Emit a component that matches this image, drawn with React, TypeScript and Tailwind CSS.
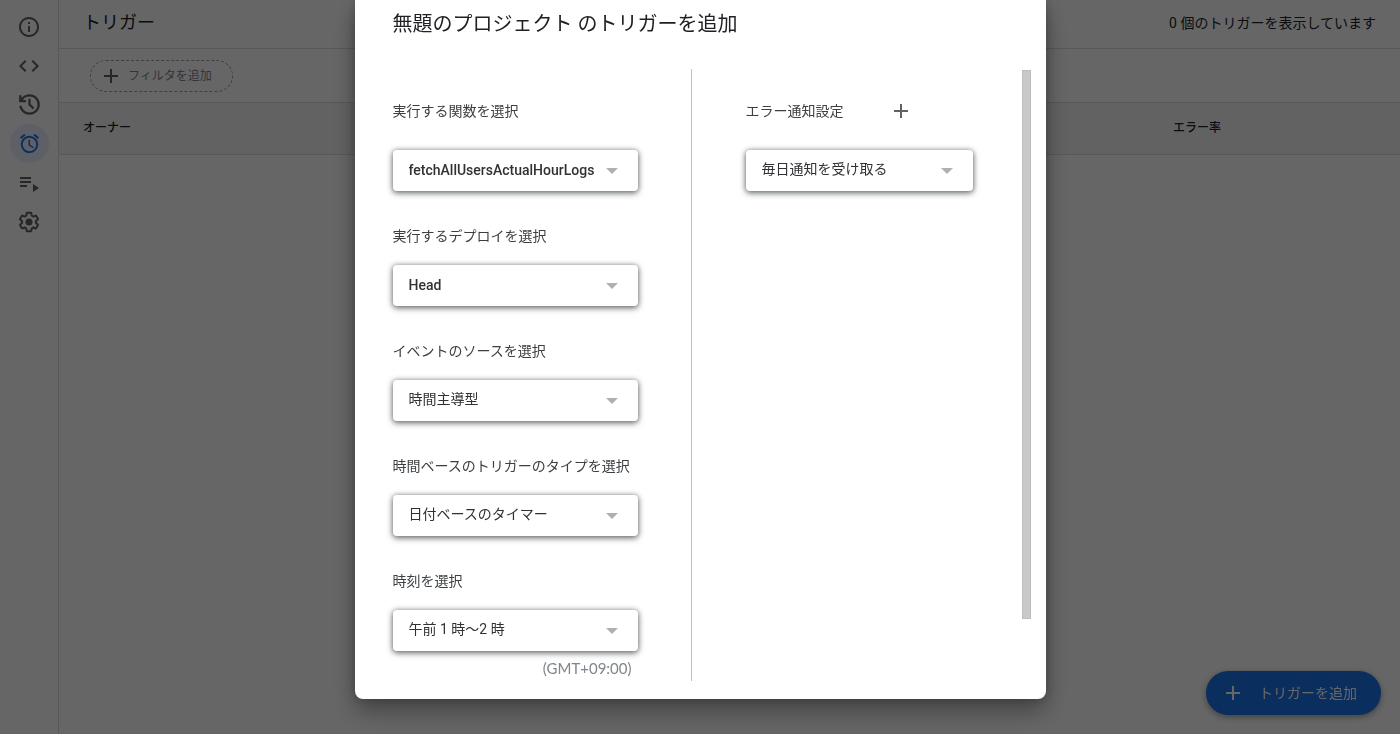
import { useState } from 'react';
import { MdAdd, MdAlarm, MdCode, MdInfoOutline } from 'react-icons/md';

interface Field {
  id: string;
  label: string;
  value: string;
}

const fields: Field[] = [
  { id: 'function', label: '実行する関数を選択', value: 'fetchAllUsersActualHourLogs' },
  { id: 'deployment', label: '実行するデプロイを選択', value: 'Head' },
  { id: 'source', label: 'イベントのソースを選択', value: '時間主導型' },
  { id: 'type', label: '時間ベースのトリガーのタイプを選択', value: '日付ベースのタイマー' },
  { id: 'time', label: '時刻を選択', value: '午前 1 時～2 時' },
];

function HistoryIcon() {
  return (
    <svg viewBox="2 2 20 20" className="size-[23px]" fill="currentColor">
      <path d="M12 21q-3.45 0-6.013-2.288T3.05 13H5.1q.35 2.6 2.312 4.3T12 19q2.925 0 4.963-2.037T19 12t-2.037-4.962T12 5q-1.725 0-3.225.8T6.25 8H9v2H3V4h2v2.35q1.275-1.6 3.113-2.475T12 3q1.875 0 3.513.713t2.85 1.924 1.925 2.85T21 12t-.712 3.513-1.925 2.85-2.85 1.925T12 21m2.8-4.8L11 12.4V7h2v4.6l3.2 3.2z" />
    </svg>
  );
}

function ExecutionsIcon() {
  return (
    <svg viewBox="0 0 24 24" className="size-6" fill="currentColor">
      <path d="M3 6h11v2H3zM3 10h11v2H3zM3 14h7v2H3zM16 13v8l6-4z" />
    </svg>
  );
}

function SettingsIcon() {
  return (
    <svg viewBox="0 0 24 24" className="size-6" fill="currentColor">
      <path d="M13.85 22.25h-3.7c-.74 0-1.36-.54-1.45-1.27l-.27-1.89c-.27-.14-.53-.29-.79-.46l-1.8.72c-.7.26-1.47-.03-1.81-.65L2.2 15.53c-.35-.66-.2-1.44.36-1.88l1.53-1.19c-.01-.15-.02-.3-.02-.46 0-.15.01-.31.02-.46l-1.52-1.19c-.59-.45-.74-1.26-.37-1.88l1.85-3.19c.34-.62 1.11-.9 1.79-.63l1.81.73c.26-.17.52-.32.78-.46l.27-1.91c.09-.7.71-1.25 1.44-1.25h3.7c.74 0 1.36.54 1.45 1.27l.27 1.89c.27.14.53.29.79.46l1.8-.72c.71-.26 1.48.03 1.82.65l1.84 3.18c.36.66.2 1.44-.36 1.88l-1.52 1.19c.01.15.02.3.02.46s-.01.31-.02.46l1.52 1.19c.56.45.72 1.23.37 1.86l-1.86 3.22c-.34.62-1.11.9-1.8.63l-1.8-.72c-.26.17-.52.32-.78.46l-.27 1.91c-.1.68-.72 1.22-1.46 1.22zm-3.23-2h2.76l.37-2.55.53-.22c.44-.18.88-.44 1.34-.78l.45-.34 2.38.96 1.38-2.4-2.03-1.58.07-.56c.03-.26.06-.51.06-.78s-.03-.53-.06-.78l-.07-.56 2.03-1.58-1.39-2.4-2.39.96-.45-.35c-.42-.32-.87-.58-1.33-.77l-.52-.22-.37-2.55h-2.76l-.37 2.55-.53.21c-.44.19-.88.44-1.34.79l-.45.33-2.38-.95-1.39 2.39 2.03 1.58-.07.56a7 7 0 0 0-.06.79c0 .26.02.53.06.78l.07.56-2.03 1.58 1.38 2.4 2.39-.96.45.35c.43.33.86.58 1.33.77l.53.22z" />
      <circle cx="12" cy="12" r="3.5" />
    </svg>
  );
}

const navItems = [
  { label: '概要', icon: <MdInfoOutline size={24} /> },
  { label: 'エディタ', icon: <MdCode size={24} /> },
  { label: 'プロジェクトの履歴', icon: <HistoryIcon /> },
  { label: 'トリガー', icon: <MdAlarm size={23} />, active: true },
  { label: '実行数', icon: <ExecutionsIcon /> },
  { label: 'プロジェクトの設定', icon: <SettingsIcon /> },
];

function Dropdown({ id, value }: { id: string; value: string }) {
  // ASCII names are set in medium, Japanese values in regular
  const isAscii = /^[\x20-\x7e]+$/.test(value);

  return (
    <div className="relative">
      <select
        id={id}
        className={`block h-[41px] w-full appearance-none rounded bg-white pl-4 pr-5 text-sm text-[#303134] shadow-[0_2px_6px_rgba(60,64,67,0.7),0_0_5px_rgba(60,64,67,0.4)] outline-none ${isAscii ? 'font-medium pb-[2px]' : 'font-normal pb-1'}`}
      >
        <option>{value}</option>
      </select>
      <svg viewBox="0 0 12 6" className="pointer-events-none absolute right-5 top-[18px] h-[6px] w-3" fill="#b0b0b0">
        <path d="M0 0h12L6 6z" />
      </svg>
    </div>
  );
}

export default function App() {
  const [open] = useState(true);

  return (
    <div lang="ja" className="flex min-h-screen bg-white font-['Roboto','Noto_Sans_CJK_JP',sans-serif] text-[#202124]">
      <nav className="w-[59px] shrink-0 border-r border-[#dadce0] pt-[7px]">
        <ul className="flex flex-col items-center">
          {navItems.map(item => (
            <li key={item.label}>
              <a
                href="#"
                aria-label={item.label}
                className={`flex size-[39px] items-center justify-center rounded-full ${item.active ? 'bg-[#e8f0fe] text-[#1a73e8]' : 'text-[#5f6368]'}`}
              >
                {item.icon}
              </a>
            </li>
          ))}
        </ul>
      </nav>

      <main className="flex-1">
        <header className="flex h-[49px] items-center justify-between border-b border-[#dadce0] pl-6 pr-6 pb-[2px]">
          <h1 className="text-lg">トリガー</h1>
          <p className="text-sm">0 個のトリガーを表示しています</p>
        </header>
        <div className="flex h-[54px] items-center border-b border-[#dadce0] pl-[31px]">
          <button className="flex h-8 items-center gap-[5px] rounded-full border border-dashed border-[#9aa0a6] pl-2 pr-5 text-xs text-[#80868b]">
            <MdAdd size={24} className="text-[#5f6368]" />
            フィルタを追加
          </button>
        </div>
        <table className="w-full table-fixed text-left text-xs">
          <thead>
            <tr className="h-[51px] border-b border-[#dadce0] bg-[#f5f5f5]">
              <th className="pl-6 font-medium">オーナー</th>
              <th className="w-[227px] font-medium">エラー率</th>
            </tr>
          </thead>
        </table>
      </main>

      <button className="fixed bottom-[19px] right-[19px] flex h-11 items-center gap-[14px] rounded-full bg-[#1a73e8] pl-[15px] pr-6 text-sm text-white shadow-[0_2px_6px_rgba(60,64,67,0.5)]">
        <MdAdd size={24} />
        トリガーを追加
      </button>

      {open && (
        <div className="fixed inset-0 flex items-start justify-center bg-black/60">
          <div
            role="dialog"
            aria-labelledby="dialog-title"
            className="w-full max-w-[691px] rounded-b-lg bg-white pb-[18px] shadow-[0_12px_24px_rgba(0,0,0,0.35),0_0_12px_rgba(0,0,0,0.2)]"
          >
            <h2 id="dialog-title" className="pl-[38px] pt-[9px] text-xl leading-[30px]">
              無題のプロジェクト のトリガーを追加
            </h2>
            <div className="mt-[30px] flex">
              <form className="flex w-[337px] shrink-0 flex-col gap-[35px] border-r border-[#bdc1c6] pl-[38px] pr-[53px] pt-8 text-[#3c4043]">
                {fields.map((field, i) => (
                  <div key={field.id}>
                    <label
                      htmlFor={field.id}
                      className={`block whitespace-nowrap text-sm leading-5 ${i === 0 ? 'mb-[29px]' : 'mb-[19px]'}`}
                    >
                      {field.label}
                    </label>
                    <Dropdown id={field.id} value={field.value} />
                    {field.id === 'time' && (
                      <p className="pr-[6px] pt-[7px] pb-[3px] text-right font-['Lato',sans-serif] text-[15px] leading-5 text-[#80868b]">
                        (GMT+09:00)
                      </p>
                    )}
                  </div>
                ))}
              </form>
              <div className="flex flex-1 items-start justify-between pl-[54px] pr-[15px]">
                <div className="w-[227px] pt-8 text-[#3c4043]">
                  <div className="mb-[29px] flex h-5 items-center gap-[45px]">
                    <label htmlFor="notify" className="text-sm leading-5">エラー通知設定</label>
                    <button aria-label="通知を追加" className="text-[#5f6368]">
                      <MdAdd size={24} />
                    </button>
                  </div>
                  <Dropdown id="notify" value="毎日通知を受け取る" />
                </div>
                <div className="mt-px h-[549px] w-[9px] border border-[#bdbdbd] bg-[#c9c9c9]" />
              </div>
            </div>
          </div>
        </div>
      )}
    </div>
  );
}
